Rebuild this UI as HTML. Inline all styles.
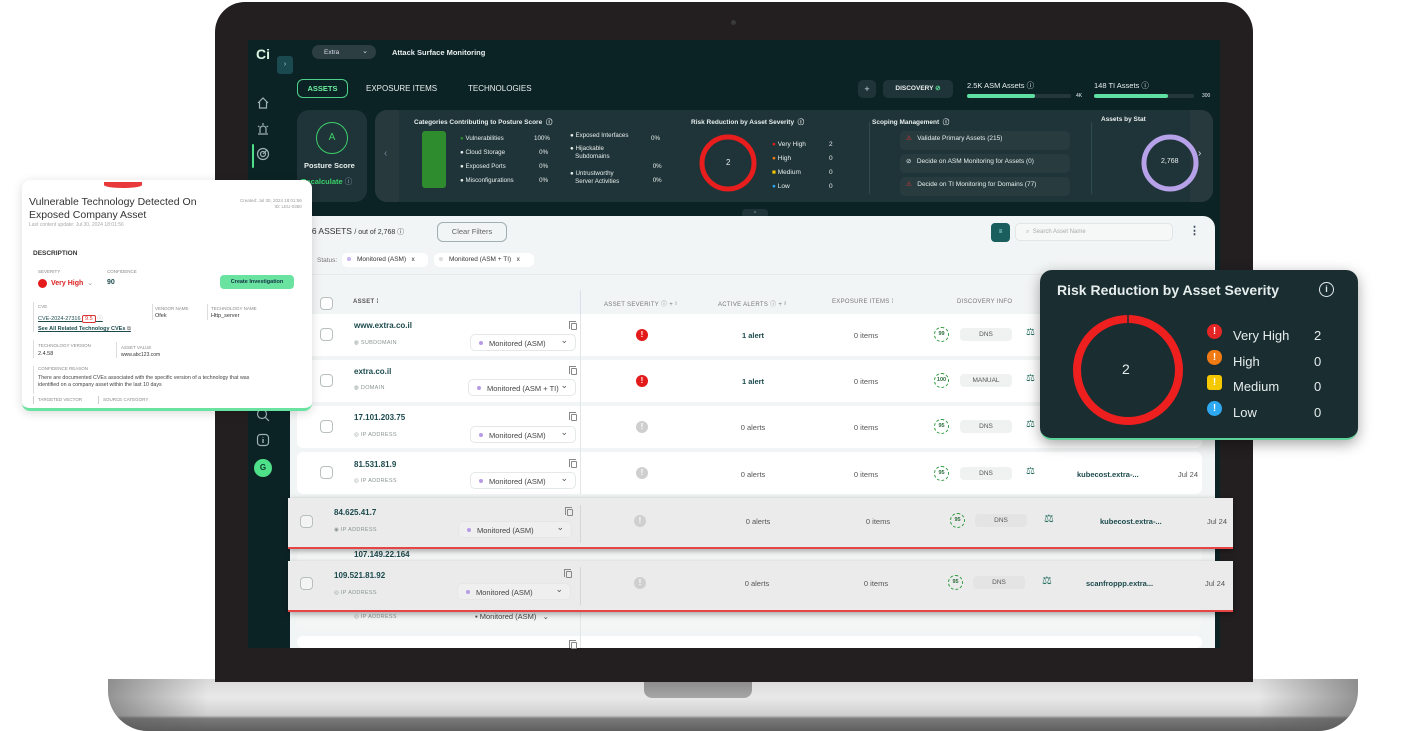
<!DOCTYPE html>
<html><head><meta charset="utf-8"><style>
*{box-sizing:border-box;margin:0;padding:0}
body{width:1402px;height:731px;background:#fff;position:relative;overflow:hidden;font-family:"Liberation Sans",sans-serif}
.a{position:absolute}
.t{position:absolute;white-space:nowrap}
.w{color:#e8eeee}
.card{background:#1f3438;border-radius:12px}
.cb{position:absolute;width:13px;height:13px;border:1px solid #b9bfbf;border-radius:4px;background:#fff}
.nm{position:absolute;font-size:8px;font-weight:bold;color:#1c4a4d}
.ty{position:absolute;font-size:5.5px;color:#8a9494;letter-spacing:.3px}
.sel{position:absolute;height:17px;border:1px solid #e4e8e8;border-radius:5px;background:#fff;font-size:7.5px;color:#444;padding:4px 0 0 18px}
.sel:before{content:"";position:absolute;left:8px;top:6px;width:4px;height:4px;border-radius:2px;background:#b79be6}
.sel:after{content:"⌄";position:absolute;right:7px;top:0px;font-size:9px;color:#555}
.sev{position:absolute;width:12px;height:12px;border-radius:50%;background:#e31b1b;color:#fff;font-size:8px;font-weight:bold;text-align:center;line-height:12px}
.sev.g{background:#cfcfcf}
.c{position:absolute;font-size:7.5px;color:#555;transform:translateX(-50%)}
.sc{position:absolute;width:15px;height:15px;border:1.5px dashed #2c9a3c;border-radius:50%;font-size:5.5px;font-weight:bold;color:#2a6b3a;text-align:center;line-height:12px}
.dns{position:absolute;height:13px;width:52px;background:#f0f2f2;border-radius:4px;font-size:6.5px;color:#555;text-align:center;line-height:13px}
.cp{position:absolute;width:6px;height:7px;border:1px solid #888;border-radius:1px}
.cp:before{content:"";position:absolute;left:-3px;top:-3px;width:6px;height:7px;border-left:1px solid #888;border-top:1px solid #888}
.row{position:absolute;background:#fff;border-radius:6px}
.hl{position:absolute;background:#ebebeb;border-bottom:2px solid #e64545;box-shadow:0 2px 6px rgba(0,0,0,.35)}
.lnk{position:absolute;font-size:7.5px;font-weight:bold;color:#1c4a4d}
.dt{position:absolute;font-size:7.5px;color:#555}
.hd{position:absolute;font-size:6px;color:#777;letter-spacing:.3px}
.dot{display:inline-block;width:4px;height:4px;border-radius:2px;background:#ddd;margin-right:6px;vertical-align:middle}
</style></head><body>

<!-- laptop base -->
<div class="a" style="left:108px;top:679px;width:1250px;height:52px;border-radius:0 0 40px 40px;background:linear-gradient(180deg,#d9d9d9 0%,#e9e9e9 35%,#cfcfcf 70%,#7a7a7a 76%,#5f5f5f 100%)"></div>
<div class="a" style="left:108px;top:679px;width:1250px;height:52px;border-radius:0 0 40px 40px;background:linear-gradient(90deg,rgba(90,90,90,.6),rgba(255,255,255,0) 8%,rgba(255,255,255,0) 92%,rgba(90,90,90,.6))"></div>
<div class="a" style="left:644px;top:681px;width:108px;height:17px;border-radius:0 0 8px 8px;background:linear-gradient(#8c8c8c,#a6a6a6);"></div>
<!-- bezel -->
<div class="a" style="left:215px;top:2px;width:1038px;height:680px;background:#231f20;border-radius:30px 30px 0 0"></div>
<div class="a" style="left:731px;top:20px;width:5px;height:5px;border-radius:3px;background:#3a3a3a"></div>
<!-- screen -->
<div class="a" style="left:248px;top:40px;width:972px;height:608px;background:#0c2326;overflow:hidden">
</div>
<!-- sidebar -->
<div class="t" style="left:256px;top:46px;font-size:14px;color:#d8f5e0;font-weight:bold">Ci</div>
<div class="a" style="left:277px;top:56px;width:16px;height:18px;background:#1a4a50;border-radius:3px;color:#9dd;font-size:7px;text-align:center;line-height:18px">›</div>
<svg class="a" style="left:256px;top:96px" width="14" height="14" viewBox="0 0 14 14"><path d="M2 7 L7 2 L12 7 M3.5 6 V12 H10.5 V6" fill="none" stroke="#9fb2b2" stroke-width="1.2"/></svg>
<svg class="a" style="left:256px;top:122px" width="14" height="14" viewBox="0 0 14 14"><path d="M4 11 V7 a3 3 0 0 1 6 0 V11 M2 12 H12 M7 1 V3 M2 4 L3.5 5 M12 4 L10.5 5" fill="none" stroke="#9fb2b2" stroke-width="1.2"/></svg>
<div class="a" style="left:252px;top:144px;width:2px;height:24px;background:#4fe08a;border-radius:1px"></div>
<svg class="a" style="left:256px;top:147px" width="14" height="14" viewBox="0 0 14 14"><circle cx="7" cy="7" r="5.5" fill="none" stroke="#9fb2b2" stroke-width="1.2"/><circle cx="7" cy="7" r="2.5" fill="none" stroke="#9fb2b2" stroke-width="1.2"/><path d="M7 7 L11 3" stroke="#9fb2b2" stroke-width="1.2"/></svg>
<svg class="a" style="left:256px;top:408px" width="14" height="14" viewBox="0 0 14 14"><circle cx="6" cy="6" r="4.5" fill="none" stroke="#9fb2b2" stroke-width="1.2"/><path d="M9.5 9.5 L13 13" stroke="#9fb2b2" stroke-width="1.2"/></svg>
<svg class="a" style="left:256px;top:433px" width="14" height="14" viewBox="0 0 14 14"><rect x="1.5" y="1.5" width="11" height="11" rx="3" fill="none" stroke="#9fb2b2" stroke-width="1.2"/><path d="M7 6 V10 M7 4 V4.5" stroke="#9fb2b2" stroke-width="1.4"/></svg>
<div class="a" style="left:254px;top:459px;width:18px;height:18px;border-radius:50%;background:#4fe08a;font-size:8px;font-weight:bold;color:#0c3a2a;text-align:center;line-height:18px">G</div>

<!-- header -->
<div class="a" style="left:312px;top:45px;width:64px;height:14px;border-radius:7px;background:#2c3e42;font-size:6.5px;color:#dde;padding:4px 0 0 12px">Extra<span style="position:absolute;right:8px;top:2px;font-size:7px">⌄</span></div>
<div class="t w" style="left:392px;top:48px;font-size:7.5px;font-weight:bold">Attack Surface Monitoring</div>
<div class="a" style="left:297px;top:79px;width:51px;height:19px;border:1px solid #4fd08a;border-radius:6px;font-size:7.5px;font-weight:bold;color:#6ef0a0;text-align:center;line-height:17px">ASSETS</div>
<div class="t w" style="left:366px;top:84px;font-size:8px">EXPOSURE ITEMS</div>
<div class="t w" style="left:468px;top:84px;font-size:8px">TECHNOLOGIES</div>
<div class="a" style="left:858px;top:80px;width:18px;height:18px;border-radius:5px;background:#1f3438;color:#cde;font-size:9px;text-align:center;line-height:18px">+</div>
<div class="a" style="left:883px;top:80px;width:70px;height:18px;border-radius:5px;background:#1f3438;color:#e8eeee;font-size:6.5px;font-weight:bold;text-align:center;line-height:18px">DISCOVERY <span style="color:#5fe09a">⊘</span></div>
<div class="t w" style="left:967px;top:80px;font-size:7.5px">2.5K ASM Assets ⓘ</div>
<div class="a" style="left:967px;top:94px;width:104px;height:4px;border-radius:2px;background:#24383c"><div style="width:68px;height:4px;border-radius:2px;background:#5fe0a0"></div></div>
<div class="t w" style="left:1076px;top:93px;font-size:5px">4K</div>
<div class="t w" style="left:1094px;top:80px;font-size:7.5px">148 TI Assets ⓘ</div>
<div class="a" style="left:1094px;top:94px;width:100px;height:4px;border-radius:2px;background:#24383c"><div style="width:74px;height:4px;border-radius:2px;background:#5fe0a0"></div></div>
<div class="t w" style="left:1202px;top:93px;font-size:5px">300</div>

<!-- posture -->
<div class="a card" style="left:297px;top:110px;width:70px;height:92px"></div>
<div class="a" style="left:316px;top:122px;width:32px;height:32px;border:1.5px solid #3ccf6a;border-radius:50%;color:#3ccf6a;font-size:10px;text-align:center;line-height:29px">A</div>
<div class="t w" style="left:304px;top:161px;font-size:7.5px;font-weight:bold">Posture Score</div>
<div class="t" style="left:301px;top:176px;font-size:7.5px;font-weight:bold;color:#3ccf6a">Recalculate <span style="color:#9ab;font-weight:normal">ⓘ</span></div>
<!-- carousel -->
<div class="a card" style="left:375px;top:110px;width:838px;height:92px;overflow:hidden">
  <div class="a" style="left:0;top:0;width:24px;height:92px;background:#27393d"></div>
  <div class="t" style="left:9px;top:38px;color:#789;font-size:10px">‹</div>
  <div class="a" style="left:815px;top:0;width:23px;height:92px;background:#27393d"></div>
  <div class="t" style="left:823px;top:38px;color:#dde;font-size:10px">›</div>
</div>
<div class="t w" style="left:414px;top:116px;font-size:6.5px;font-weight:bold">Categories Contributing to Posture Score &nbsp;ⓘ</div>
<div class="a" style="left:422px;top:131px;width:24px;height:57px;background:#2e8b2e;border-radius:3px"></div>
<div class="t w" style="left:460px;top:132px;font-size:6.2px;line-height:14px"><span style="color:#2e8b2e">●</span> Vulnerabilities<br>● Cloud Storage<br>● Exposed Ports<br>● Misconfigurations</div>
<div class="t w" style="left:534px;top:132px;font-size:6.2px;line-height:14px">100%<br>&nbsp;&nbsp;&nbsp;0%<br>&nbsp;&nbsp;&nbsp;0%<br>&nbsp;&nbsp;&nbsp;0%</div>
<div class="t w" style="left:570px;top:132px;font-size:6.2px;line-height:8px">● Exposed Interfaces<br><br><span style="position:relative;top:-3px">● Hijackable<br>&nbsp;&nbsp;&nbsp;Subdomains</span><br><br><span style="position:relative;top:-2px">● Untrustworthy<br>&nbsp;&nbsp;&nbsp;Server Activities</span></div>
<div class="t w" style="left:651px;top:132px;font-size:6.2px;line-height:14px">0%<br><br>&nbsp;0%<br>&nbsp;0%</div>
<div class="t w" style="left:691px;top:116px;font-size:6.5px;font-weight:bold">Risk Reduction by Asset Severity &nbsp;ⓘ</div>
<svg class="a" style="left:698px;top:133px" width="60" height="60"><circle cx="30" cy="30" r="26" fill="none" stroke="#e81e1e" stroke-width="5"/></svg>
<div class="t w" style="left:726px;top:158px;font-size:8px">2</div>
<div class="t w" style="left:772px;top:138px;font-size:6.5px;line-height:14px"><span style="color:#e31b1b">●</span> Very High<br><span style="color:#f07a14">●</span> High<br><span style="color:#f5c800">■</span> Medium<br><span style="color:#2ea8f0">●</span> Low</div>
<div class="t w" style="left:829px;top:138px;font-size:6.5px;line-height:14px">2<br>0<br>0<br>0</div>
<div class="a" style="left:869px;top:122px;width:1px;height:72px;background:#2f4a4e"></div>
<div class="t w" style="left:872px;top:116px;font-size:6.5px;font-weight:bold">Scoping Management &nbsp;ⓘ</div>
<div class="a" style="left:900px;top:131px;width:170px;height:19px;background:#283c40;border-radius:5px"></div>
<div class="a" style="left:900px;top:154px;width:170px;height:19px;background:#283c40;border-radius:5px"></div>
<div class="a" style="left:900px;top:177px;width:170px;height:19px;background:#283c40;border-radius:5px"></div>
<div class="t w" style="left:906px;top:134px;font-size:6.5px"><span style="color:#e33">⚠</span>&nbsp;&nbsp; Validate Primary Assets (215)</div>
<div class="t w" style="left:906px;top:157px;font-size:6.5px">⊘&nbsp;&nbsp; Decide on ASM Monitoring for Assets (0)</div>
<div class="t w" style="left:906px;top:180px;font-size:6.5px"><span style="color:#e33">⚠</span>&nbsp;&nbsp; Decide on TI Monitoring for Domains (77)</div>
<div class="a" style="left:1091px;top:122px;width:1px;height:72px;background:#2f4a4e"></div>
<div class="t w" style="left:1101px;top:116px;font-size:6.5px;font-weight:bold">Assets by Stat</div>
<svg class="a" style="left:1140px;top:133px" width="60" height="60"><circle cx="30" cy="30" r="26" fill="none" stroke="#b7a2ea" stroke-width="5"/></svg>
<div class="t w" style="left:1161px;top:158px;font-size:7px">2,768</div>
<div class="a" style="left:742px;top:209px;width:26px;height:10px;background:#1f3438;border-radius:4px 4px 0 0;font-size:5px;color:#9ab;text-align:center;line-height:10px">^</div>

<!-- table panel -->
<div class="a" style="left:290px;top:216px;width:925px;height:432px;background:#f2f5f5;border-radius:12px 12px 0 0"></div>
<div class="t" style="left:300px;top:226px;font-size:8.5px;color:#333"><b style="font-weight:normal">,496 ASSETS</b> <span style="font-size:7px">/ out of 2,768 ⓘ</span></div>
<div class="a" style="left:437px;top:222px;width:70px;height:20px;border:1px solid #9fb0b0;border-radius:6px;font-size:7.5px;color:#666;text-align:center;line-height:18px">Clear Filters</div>
<div class="a" style="left:991px;top:223px;width:19px;height:19px;background:#1a5e5e;border-radius:4px;color:#bfe;font-size:6px;text-align:center;line-height:19px">≡</div>
<div class="a" style="left:1015px;top:223px;width:158px;height:18px;border:1px solid #e2e6e6;border-radius:5px;background:#f6f8f8;font-size:6px;color:#aaa;padding:5px 0 0 10px">⌕ &nbsp;Search Asset Name</div>
<div class="t" style="left:1189px;top:224px;font-size:11px;color:#345;font-weight:bold">⋮</div>
<div class="t" style="left:317px;top:257px;font-size:6.5px;color:#777">Status:</div>
<div class="a" style="left:342px;top:253px;width:86px;height:14px;background:#fff;border-radius:5px;font-size:6.5px;color:#333;padding:3px 0 0 5px"><span class="dot" style="background:#c8b4f0"></span>Monitored (ASM) &nbsp;&nbsp;x</div>
<div class="a" style="left:434px;top:253px;width:100px;height:14px;background:#fff;border-radius:5px;font-size:6.5px;color:#333;padding:3px 0 0 5px"><span class="dot"></span>Monitored (ASM + TI) &nbsp;&nbsp;x</div>
<div class="a" style="left:297px;top:274px;width:905px;height:1px;background:#e6eaea"></div>

<div class="cb" style="left:320px;top:297px"></div>
<div class="hd" style="left:353px;top:299px;font-weight:bold;color:#555">ASSET ⁞</div>
<div class="a" style="left:580px;top:290px;width:1px;height:24px;background:#dde"></div>
<div class="hd" style="left:604px;top:299px">ASSET SEVERITY ⓘ + ¹</div>
<div class="hd" style="left:718px;top:299px">ACTIVE ALERTS ⓘ + ²</div>
<div class="hd" style="left:832px;top:299px">EXPOSURE ITEMS ⁞</div>
<div class="hd" style="left:957px;top:299px">DISCOVERY INFO</div>

<!-- rows -->
<div class="row" style="left:297px;top:314px;width:905px;height:42px"></div>
<div class="row" style="left:297px;top:360px;width:905px;height:42px"></div>
<div class="row" style="left:297px;top:406px;width:905px;height:42px"></div>
<div class="row" style="left:297px;top:452px;width:905px;height:42px"></div>
<div class="a" style="left:580px;top:314px;width:1px;height:180px;background:#e2e6e6"></div>

<div class="cb" style="left:320px;top:328px"></div><div class="nm" style="left:354px;top:321px">www.extra.co.il</div><div class="ty" style="left:354px;top:340px">◍ SUBDOMAIN</div><div class="cp" style="left:571px;top:323px"></div><div class="sel" style="left:470px;top:334px;width:106px">Monitored (ASM)</div>
<div class="sev" style="left:636px;top:329px">!</div><div class="c" style="left:753px;top:331px;font-weight:bold;color:#1c4a4d">1 alert</div><div class="c" style="left:866px;top:331px">0 items</div><div class="sc" style="left:934px;top:327px">99</div><div class="dns" style="left:960px;top:328px">DNS</div><div class="t" style="left:1026px;top:327px;color:#1c6a5a;font-size:10px">⚖</div>

<div class="cb" style="left:320px;top:374px"></div><div class="nm" style="left:354px;top:367px">extra.co.il</div><div class="ty" style="left:354px;top:385px">◍ DOMAIN</div><div class="cp" style="left:571px;top:368px"></div><div class="sel" style="left:468px;top:379px;width:108px">Monitored (ASM + TI)</div>
<div class="sev" style="left:636px;top:375px">!</div><div class="c" style="left:753px;top:377px;font-weight:bold;color:#1c4a4d">1 alert</div><div class="c" style="left:866px;top:377px">0 items</div><div class="sc" style="left:934px;top:373px">100</div><div class="dns" style="left:960px;top:374px">MANUAL</div><div class="t" style="left:1026px;top:373px;color:#1c6a5a;font-size:10px">⚖</div>

<div class="cb" style="left:320px;top:420px"></div><div class="nm" style="left:354px;top:413px">17.101.203.75</div><div class="ty" style="left:354px;top:432px">◎ IP ADDRESS</div><div class="cp" style="left:571px;top:414px"></div><div class="sel" style="left:470px;top:426px;width:106px">Monitored (ASM)</div>
<div class="sev g" style="left:636px;top:421px">!</div><div class="c" style="left:753px;top:423px">0 alerts</div><div class="c" style="left:866px;top:423px">0 items</div><div class="sc" style="left:934px;top:419px">95</div><div class="dns" style="left:960px;top:420px">DNS</div><div class="t" style="left:1026px;top:419px;color:#1c6a5a;font-size:10px">⚖</div>

<div class="cb" style="left:320px;top:466px"></div><div class="nm" style="left:354px;top:460px">81.531.81.9</div><div class="ty" style="left:354px;top:478px">◎ IP ADDRESS</div><div class="cp" style="left:571px;top:461px"></div><div class="sel" style="left:470px;top:472px;width:106px">Monitored (ASM)</div>
<div class="sev g" style="left:636px;top:467px">!</div><div class="c" style="left:753px;top:470px">0 alerts</div><div class="c" style="left:866px;top:470px">0 items</div><div class="sc" style="left:934px;top:466px">95</div><div class="dns" style="left:960px;top:467px">DNS</div><div class="t" style="left:1026px;top:466px;color:#1c6a5a;font-size:10px">⚖</div><div class="lnk" style="left:1077px;top:470px">kubecost.extra-...</div><div class="dt" style="left:1178px;top:470px">Jul 24</div>

<!-- behind rows -->
<div class="row" style="left:297px;top:546px;width:905px;height:20px;background:#f7f8f8"></div>
<div class="nm" style="left:354px;top:550px">107.149.22.164</div>
<div class="row" style="left:297px;top:600px;width:905px;height:30px;background:#f4f6f6"></div>
<div class="ty" style="left:354px;top:614px">◎ IP ADDRESS</div><div class="t" style="left:475px;top:612px;font-size:7.5px;color:#444">▪ Monitored (ASM) &nbsp;&nbsp;⌄</div>
<div class="row" style="left:297px;top:636px;width:905px;height:12px"></div>
<div class="cp" style="left:571px;top:642px"></div>
<div class="a" style="left:580px;top:600px;width:1px;height:48px;background:#e2e6e6"></div>

<!-- highlighted rows -->
<div class="hl" style="left:288px;top:498px;width:945px;height:51px"></div>
<div class="cb" style="left:300px;top:515px;background:#f4f4f4"></div><div class="nm" style="left:334px;top:508px">84.625.41.7</div><div class="ty" style="left:334px;top:527px">◉ IP ADDRESS</div><div class="cp" style="left:567px;top:509px"></div><div class="sel" style="left:458px;top:521px;width:114px;background:#efefef;border-color:#e6e6e6">Monitored (ASM)</div>
<div class="a" style="left:580px;top:505px;width:1px;height:38px;background:#d5d5d5"></div>
<div class="sev g" style="left:634px;top:515px">!</div><div class="c" style="left:758px;top:517px">0 alerts</div><div class="c" style="left:878px;top:517px">0 items</div><div class="sc" style="left:950px;top:513px">95</div><div class="dns" style="left:975px;top:514px;background:#e4e4e4">DNS</div><div class="t" style="left:1044px;top:512px;color:#1c6a5a;font-size:11px">⚖</div><div class="lnk" style="left:1100px;top:517px">kubecost.extra-...</div><div class="dt" style="left:1207px;top:517px">Jul 24</div>

<div class="hl" style="left:288px;top:561px;width:945px;height:51px"></div>
<div class="cb" style="left:300px;top:577px;background:#f4f4f4"></div><div class="nm" style="left:334px;top:571px">109.521.81.92</div><div class="ty" style="left:334px;top:590px">◎ IP ADDRESS</div><div class="cp" style="left:566px;top:571px"></div><div class="sel" style="left:457px;top:583px;width:114px;background:#efefef;border-color:#e6e6e6">Monitored (ASM)</div>
<div class="a" style="left:580px;top:567px;width:1px;height:38px;background:#d5d5d5"></div>
<div class="sev g" style="left:634px;top:577px">!</div><div class="c" style="left:757px;top:579px">0 alerts</div><div class="c" style="left:876px;top:579px">0 items</div><div class="sc" style="left:948px;top:575px">95</div><div class="dns" style="left:973px;top:576px;background:#e4e4e4">DNS</div><div class="t" style="left:1042px;top:574px;color:#1c6a5a;font-size:11px">⚖</div><div class="lnk" style="left:1086px;top:579px">scanfroppp.extra...</div><div class="dt" style="left:1205px;top:579px">Jul 24</div>

<!-- left popup -->
<div class="a" style="left:22px;top:180px;width:290px;height:231px;background:#fff;border-radius:8px;box-shadow:0 2px 10px rgba(0,0,0,.15);border-bottom:3px solid #6be3a0"></div>
<div class="a" style="left:104px;top:182px;width:38px;height:6px;background:#e83a3a;border-radius:0 0 50% 50%"></div>
<div class="t" style="left:29px;top:196px;font-size:10.5px;color:#333;line-height:13px">Vulnerable Technology Detected On<br>Exposed Company Asset</div>
<div class="t" style="left:29px;top:222px;font-size:5px;color:#aaa">Last content update: Jul 30, 2024 18:01:56</div>
<div class="t" style="left:240px;top:198px;font-size:4.5px;color:#999;text-align:right;line-height:6px">Created: Jul 30, 2024 18:01:56<br>ID: LEU-0360</div>
<div class="t" style="left:33px;top:250px;font-size:6.5px;color:#333;font-weight:bold">DESCRIPTION</div>
<div class="t" style="left:38px;top:269px;font-size:4.5px;color:#888">SEVERITY</div>
<div class="t" style="left:107px;top:269px;font-size:4.5px;color:#888">CONFIDENCE</div>
<div class="a" style="left:38px;top:279px;width:9px;height:9px;border-radius:50%;background:#e31b1b"></div>
<div class="t" style="left:51px;top:279px;font-size:7px;color:#d22;font-weight:bold">Very High &nbsp;<span style="color:#999;font-weight:normal">⌄</span></div>
<div class="t" style="left:107px;top:279px;font-size:7px;color:#1c4a4d;font-weight:bold">90</div>
<div class="a" style="left:220px;top:275px;width:74px;height:14px;background:#6be3a0;border-radius:4px;font-size:5.5px;color:#134;font-weight:bold;text-align:center;line-height:14px">Create Investigation</div>
<div class="a" style="left:33px;top:302px;width:1px;height:30px;background:#ddd"></div>
<div class="t" style="left:38px;top:304px;font-size:4.5px;color:#888">CVE</div>
<div class="t" style="left:38px;top:314px;font-size:5.5px;color:#1c4a4d;text-decoration:underline">CVE-2024-27316 <span style="border:1px solid #d33;color:#d33;border-radius:2px;padding:0 2px;text-decoration:none;display:inline-block">9.5</span> <span style="color:#999">ⓘ</span></div>
<div class="t" style="left:38px;top:326px;font-size:5.5px;color:#1c4a4d;font-weight:bold;text-decoration:underline">See All Related Technology CVEs <span style="color:#999">⧉</span></div>
<div class="a" style="left:152px;top:304px;width:1px;height:16px;background:#ddd"></div>
<div class="t" style="left:155px;top:305px;font-size:4.5px;color:#888;line-height:7px">VENDOR NAME<br><span style="color:#333;font-size:5.5px">Ofek</span></div>
<div class="a" style="left:207px;top:304px;width:1px;height:16px;background:#ddd"></div>
<div class="t" style="left:211px;top:305px;font-size:4.5px;color:#888;line-height:7px">TECHNOLOGY NAME<br><span style="color:#333;font-size:5.5px">Http_server</span></div>
<div class="a" style="left:33px;top:340px;width:1px;height:18px;background:#ddd"></div>
<div class="t" style="left:38px;top:342px;font-size:4.5px;color:#888;line-height:8px">TECHNOLOGY VERSION<br><span style="color:#333;font-size:5.5px">2.4.58</span></div>
<div class="a" style="left:116px;top:342px;width:1px;height:16px;background:#ddd"></div>
<div class="t" style="left:121px;top:344px;font-size:4.5px;color:#888;line-height:7px">ASSET VALUE<br><span style="color:#333;font-size:5px">www.abc123.com</span></div>
<div class="a" style="left:33px;top:366px;width:1px;height:28px;background:#ddd"></div>
<div class="t" style="left:38px;top:366px;font-size:4.5px;color:#888">CONFIDENCE REASON</div>
<div class="t" style="left:38px;top:375px;font-size:5.3px;color:#444;line-height:7px">There are documented CVEs associated with the specific version of a technology that was<br>identified on a company asset within the last 10 days</div>
<div class="a" style="left:33px;top:396px;width:1px;height:8px;background:#ccc"></div>
<div class="t" style="left:38px;top:397px;font-size:4.5px;color:#888">TARGETED VECTOR</div>
<div class="a" style="left:98px;top:396px;width:1px;height:8px;background:#ccc"></div>
<div class="t" style="left:103px;top:397px;font-size:4.5px;color:#888">SOURCE CATEGORY</div>

<!-- risk popup -->
<div class="a" style="left:1040px;top:270px;width:318px;height:170px;background:#1a2d31;border-radius:12px;box-shadow:0 4px 14px rgba(0,0,0,.35);border-bottom:2px solid #5fd49a"></div>
<div class="t" style="left:1057px;top:282px;font-size:14px;font-weight:bold;color:#e6eded">Risk Reduction by Asset Severity</div>
<div class="a" style="left:1319px;top:282px;width:15px;height:15px;border:1.3px solid #e6eded;border-radius:50%;color:#e6eded;font-size:9px;text-align:center;line-height:13px;font-weight:bold">i</div>
<svg class="a" style="left:1071px;top:313px" width="114" height="114"><circle cx="57" cy="57" r="51" fill="none" stroke="#ee1f1f" stroke-width="8"/><line x1="57" y1="1" x2="57" y2="12" stroke="#1a2d31" stroke-width="1.5"/></svg>
<div class="t" style="left:1122px;top:361px;font-size:14px;color:#e6eded">2</div>
<div class="a" style="left:1207px;top:324px;width:15px;height:15px;border-radius:50%;background:#e52525;color:#fff;font-size:10px;text-align:center;line-height:15px;font-weight:bold">!</div>
<div class="a" style="left:1207px;top:350px;width:15px;height:15px;border-radius:45% 45% 50% 50%;background:#f07a14;color:#fff;font-size:10px;text-align:center;line-height:15px;font-weight:bold">!</div>
<div class="a" style="left:1207px;top:375px;width:15px;height:15px;border-radius:3px;background:#f5c800;color:#fff;font-size:10px;text-align:center;line-height:15px;font-weight:bold">!</div>
<div class="a" style="left:1207px;top:401px;width:15px;height:15px;border-radius:50%;background:#2ea8f0;color:#fff;font-size:10px;text-align:center;line-height:15px;font-weight:bold">!</div>
<div class="t" style="left:1233px;top:323px;font-size:13px;color:#e6eded;line-height:25.7px">Very High<br>High<br>Medium<br>Low</div>
<div class="t" style="left:1314px;top:323px;font-size:13px;color:#e6eded;line-height:25.7px">2<br>0<br>0<br>0</div>
</body></html>
